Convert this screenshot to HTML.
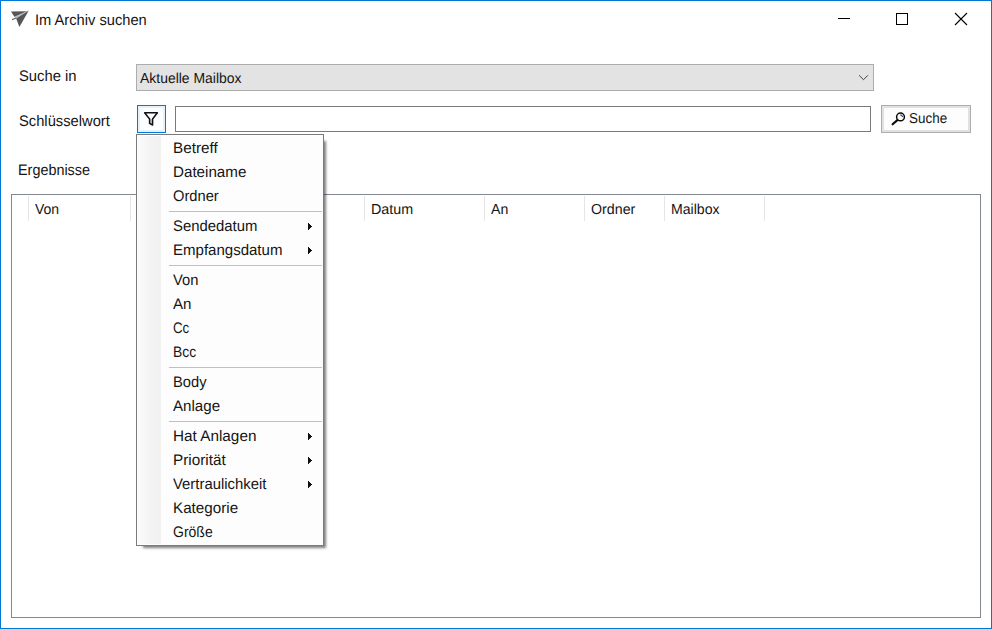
<!DOCTYPE html>
<html lang="de"><head><meta charset="utf-8"><title>Im Archiv suchen</title>
<style>
html,body{margin:0;padding:0;background:#fff;}
body{width:992px;height:629px;position:relative;overflow:hidden;font-family:"Liberation Sans",sans-serif;font-size:15.3px;color:#000;}
.abs{position:absolute;display:block}
.t{position:absolute;white-space:nowrap;line-height:20px;height:20px;color:#151515;text-rendering:geometricPrecision;transform-origin:0 0}
.s{font-size:14.4px}
.m{font-size:15.3px}
#win{position:absolute;left:0;top:0;width:990px;height:627px;border:1px solid #0078d7;background:#fff}
#combo{position:absolute;left:136px;top:64px;width:736px;height:25px;border:1px solid #adadad;background:#e3e3e3}
#fbtn{position:absolute;left:137px;top:105px;width:27px;height:26px;border:1px solid #0078d7;background:#fdfeff;box-shadow:inset 0 0 0 2px #e5f1fb}
#tbox{position:absolute;left:175px;top:106px;width:694px;height:24px;border:1px solid #7a7a7a;background:#fff}
#sbtn{position:absolute;left:881px;top:105px;width:88px;height:26px;border:1px solid #adadad;background:#fdfdfd;box-shadow:inset 0 0 0 2px #e1e1e1}
#list{position:absolute;left:11px;top:194px;width:968px;height:422px;border:1px solid #828790;background:#fff}
.hs{position:absolute;top:196px;width:1px;height:25px;background:#e5e5e5}
#menu{position:absolute;left:136px;top:134px;width:186px;height:410px;border:1px solid #7b7b7b;background:#fdfdfd;box-shadow:4.3px 4.3px 2.4px -2.4px rgba(0,0,0,.5)}
#gut{position:absolute;left:138px;top:136px;width:23px;height:408px;background:linear-gradient(to right,#fbfbfb 0,#f3f3f3 60%,#f1f1f1 100%)}
</style></head><body>
<div id="win"></div>
<svg class="abs" style="left:10px;top:10px" width="20" height="18" viewBox="10 10 20 18"><path d="M11 11.5 L27.2 11.3 L14.5 17 Z" fill="#565658"/><path d="M28.7 10.5 L14.3 16.7 L16.3 18.8 Z" fill="#b9b9b9"/><path d="M28.8 10.4 L16.2 18.4 L19.4 26.9 Z" fill="#565658"/><path d="M12 19.7 L16.4 18" stroke="#6a6a6a" stroke-width="1.3" fill="none"/></svg>
<svg class="abs" style="left:838px;top:12px" width="130" height="14" viewBox="0 0 130 14" shape-rendering="crispEdges"><path d="M0 6.5 H12" stroke="#000" stroke-width="1" fill="none"/><rect x="58.5" y="1.5" width="11" height="11" stroke="#000" stroke-width="1" fill="none"/><path d="M117 1 L129 13 M129 1 L117 13" stroke="#000" stroke-width="1.1" fill="none" shape-rendering="auto"/></svg>
<div id="combo"></div>
<svg class="abs" style="left:858px;top:74px" width="11" height="8" viewBox="0 0 11 8"><path d="M1.1 1.3 L5.5 5.7 L9.9 1.3" stroke="#404040" stroke-width="1" fill="none"/></svg>
<div id="fbtn"></div>
<svg class="abs" style="left:143px;top:111px" width="16" height="16" viewBox="0 0 16 16"><path d="M6.6 8 H9.6 V14 L6.6 12.4 Z" fill="#cfcfcf"/><path d="M1.6 1.8 H14.4 L9.6 8 V14 L6.6 12.4 V8 Z" stroke="#111" stroke-width="1.5" fill="none" stroke-linejoin="round"/></svg>
<div id="tbox"></div>
<div id="sbtn"></div>
<svg class="abs" style="left:890px;top:111px" width="16" height="16" viewBox="0 0 16 16"><circle cx="10.5" cy="5.95" r="3.9" stroke="#0a0a0a" stroke-width="1.5" fill="none"/><path d="M7.4 9.1 L2.6 13.3" stroke="#0a0a0a" stroke-width="2.1" stroke-linecap="round"/><path d="M10.2 3.9 A2.1 2.1 0 0 1 12.5 6.1" stroke="#0a0a0a" stroke-width="0.9" fill="none"/></svg>
<div id="list"></div>
<div class="hs" style="left:28px"></div><div class="hs" style="left:130px"></div><div class="hs" style="left:364px"></div><div class="hs" style="left:484px"></div><div class="hs" style="left:584px"></div><div class="hs" style="left:664px"></div><div class="hs" style="left:764px"></div>
<div id="menu"></div><div id="gut"></div>
<div class="abs" style="left:169px;top:211px;width:153px;height:1px;background:#c0c0c0"></div>
<div class="abs" style="left:169px;top:265px;width:153px;height:1px;background:#c0c0c0"></div>
<div class="abs" style="left:169px;top:367px;width:153px;height:1px;background:#c0c0c0"></div>
<div class="abs" style="left:169px;top:421px;width:153px;height:1px;background:#c0c0c0"></div>
<svg class="abs" style="left:308px;top:223px" width="4" height="7" viewBox="0 0 4 7" shape-rendering="crispEdges"><path d="M0 0h1v1h1v1h1v1h1v1h-1v1h-1v1h-1v1h-1z" fill="#111"/></svg>
<svg class="abs" style="left:308px;top:247px" width="4" height="7" viewBox="0 0 4 7" shape-rendering="crispEdges"><path d="M0 0h1v1h1v1h1v1h1v1h-1v1h-1v1h-1v1h-1z" fill="#111"/></svg>
<svg class="abs" style="left:308px;top:433px" width="4" height="7" viewBox="0 0 4 7" shape-rendering="crispEdges"><path d="M0 0h1v1h1v1h1v1h1v1h-1v1h-1v1h-1v1h-1z" fill="#111"/></svg>
<svg class="abs" style="left:308px;top:457px" width="4" height="7" viewBox="0 0 4 7" shape-rendering="crispEdges"><path d="M0 0h1v1h1v1h1v1h1v1h-1v1h-1v1h-1v1h-1z" fill="#111"/></svg>
<svg class="abs" style="left:308px;top:481px" width="4" height="7" viewBox="0 0 4 7" shape-rendering="crispEdges"><path d="M0 0h1v1h1v1h1v1h1v1h-1v1h-1v1h-1v1h-1z" fill="#111"/></svg>
<span class="t" id="title" style="left:34.66px;top:11px;transform:scaleX(0.9596)">Im Archiv suchen</span>
<span class="t" id="l1" style="left:18.88px;top:67px;transform:scaleX(0.9668)">Suche in</span>
<span class="t s" id="cb" style="left:140.47px;top:69px;transform:scaleX(0.9682)">Aktuelle Mailbox</span>
<span class="t" id="l2" style="left:18.83px;top:112px;transform:scaleX(0.9624)">Schlüsselwort</span>
<span class="t s" id="btn" style="left:909.31px;top:109px;transform:scaleX(0.9344)">Suche</span>
<span class="t" id="l3" style="left:17.88px;top:161px;transform:scaleX(0.9407)">Ergebnisse</span>
<span class="t s" id="h1" style="left:34.97px;top:200px;transform:scaleX(0.9739)">Von</span>
<span class="t s" id="h2" style="left:370.82px;top:200px;transform:scaleX(0.9963)">Datum</span>
<span class="t s" id="h3" style="left:491.46px;top:200px;transform:scaleX(0.9831)">An</span>
<span class="t s" id="h4" style="left:590.73px;top:200px;transform:scaleX(0.9895)">Ordner</span>
<span class="t s" id="h5" style="left:670.71px;top:200px;transform:scaleX(0.9801)">Mailbox</span>
<span class="t m" id="m0" style="left:173.37px;top:139px;transform:scaleX(0.9980)">Betreff</span>
<span class="t m" id="m1" style="left:173.00px;top:163px;transform:scaleX(0.9917)">Dateiname</span>
<span class="t m" id="m2" style="left:173.41px;top:187px;transform:scaleX(0.9600)">Ordner</span>
<span class="t m" id="m3" style="left:173.07px;top:217px;transform:scaleX(0.9724)">Sendedatum</span>
<span class="t m" id="m4" style="left:173.47px;top:241px;transform:scaleX(0.9822)">Empfangsdatum</span>
<span class="t m" id="m5" style="left:173.20px;top:271px;transform:scaleX(0.9639)">Von</span>
<span class="t m" id="m6" style="left:173.22px;top:295px;transform:scaleX(0.9872)">An</span>
<span class="t m" id="m7" style="left:173.30px;top:319px;transform:scaleX(0.8680)">Cc</span>
<span class="t m" id="m8" style="left:173.08px;top:343px;transform:scaleX(0.9073)">Bcc</span>
<span class="t m" id="m9" style="left:173.05px;top:373px;transform:scaleX(0.9626)">Body</span>
<span class="t m" id="m10" style="left:173.10px;top:397px;transform:scaleX(0.9878)">Anlage</span>
<span class="t m" id="m11" style="left:173.09px;top:427px;transform:scaleX(1.0007)">Hat Anlagen</span>
<span class="t m" id="m12" style="left:173.39px;top:451px;transform:scaleX(0.9990)">Priorität</span>
<span class="t m" id="m13" style="left:173.23px;top:475px;transform:scaleX(0.9713)">Vertraulichkeit</span>
<span class="t m" id="m14" style="left:173.36px;top:499px;transform:scaleX(0.9939)">Kategorie</span>
<span class="t m" id="m15" style="left:173.24px;top:523px;transform:scaleX(0.9159)">Größe</span>
</body></html>
